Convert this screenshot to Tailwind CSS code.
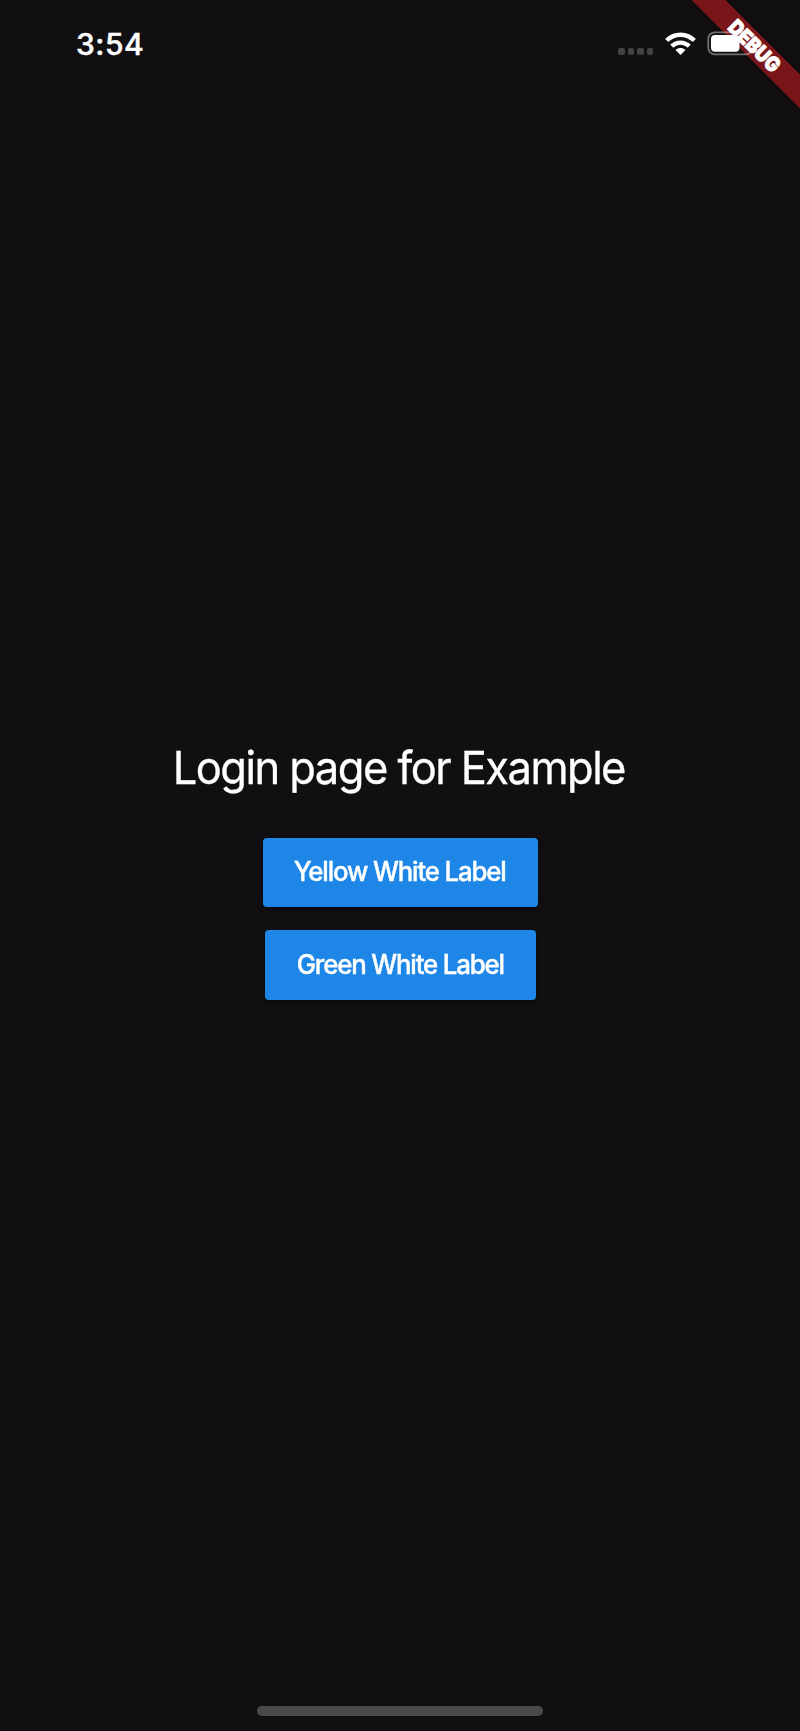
<!DOCTYPE html>
<html lang="en">
<head>
<meta charset="utf-8">
<title>Login</title>
<script src="https://cdn.jsdelivr.net/npm/@tailwindcss/browser@4"></script>
</head>
<body class="bg-[#110f12] text-white font-['Inter','Liberation_Sans',sans-serif]">
<div class="relative w-[800px] h-[1731px] overflow-hidden flex flex-col">
  <header class="h-[88px] shrink-0 flex items-center justify-between pl-[76px] pr-[45px]">
    <span class="text-[30px] font-medium leading-none tracking-[0.5px] [-webkit-text-stroke:0.5px_white]">3:54</span>
    <div class="flex items-center gap-[12px]">
      <div class="flex gap-[3px] pt-[15px]">
        <i class="w-[6.5px] h-[7px] rounded-[2px] bg-[#434245]"></i>
        <i class="w-[6.5px] h-[7px] rounded-[2px] bg-[#434245]"></i>
        <i class="w-[6.5px] h-[7px] rounded-[2px] bg-[#434245]"></i>
        <i class="w-[6.5px] h-[7px] rounded-[2px] bg-[#434245]"></i>
      </div>
      <svg class="w-[31px] h-[24px]" viewBox="0 0 31 24" fill="#fff">
        <path d="M15.5 0.5C21.3 0.5 26.5 2.8 30.4 6.4C30.8 6.8 30.8 7 30.4 7.4L28.2 9.6C27.9 9.9 27.6 9.9 27.2 9.6C24.1 6.7 20 5 15.5 5S6.900 6.700 3.800 9.600C3.400 9.900 3.100 9.900 2.800 9.600L0.600 7.400C0.200 7 0.200 6.800 0.600 6.400C4.500 2.800 9.700 0.500 15.500 0.500Z"/>
        <path d="M15.500 8.400C19.200 8.400 22.600 9.800 25.200 12.100C25.600 12.500 25.600 12.800 25.200 13.200L23.100 15.200C22.700 15.600 22.400 15.600 22 15.200C20.200 13.700 18 12.800 15.500 12.800S10.800 13.700 9 15.200C8.600 15.600 8.300 15.600 7.900 15.200L5.800 13.200C5.400 12.800 5.400 12.500 5.800 12.100C8.400 9.800 11.800 8.400 15.500 8.400Z"/>
        <path d="M15.500 16C17.200 16 18.800 16.600 20 17.600C20.400 18 20.400 18.300 20 18.600L16 22.600C15.700 23 15.300 23 15 22.600L11 18.600C10.600 18.300 10.600 18 11 17.600C12.200 16.600 13.800 16 15.500 16Z"/>
      </svg>
      <div class="w-[47px] h-[24px]"></div>
    </div>
  </header>

  <!-- Debug ribbon with the battery over it -->
  <svg class="absolute top-0 right-0 w-[120px] h-[120px]" viewBox="680 0 120 120">
    <defs><filter id="s" x="-20%" y="-20%" width="140%" height="140%"><feGaussianBlur stdDeviation="4"/></filter></defs>
    <path d="M692 0H725L800 75V108Z" fill="#000" opacity=".4" filter="url(#s)"/>
    <path d="M691.500 0H725.500L800 74.500V108.500Z" fill="#7a1519"/>
    <rect x="708.300" y="32.300" width="44.500" height="22" rx="6.500" fill="none" stroke="#fff" stroke-opacity=".4" stroke-width="1.800"/>
    <rect x="711" y="35" width="28.500" height="16.800" rx="4" fill="#fff"/>
    <text transform="translate(754.500 46) rotate(45)" y="7.300" text-anchor="middle" textLength="64" lengthAdjust="spacingAndGlyphs" font-family="Inter" font-size="20.500" font-weight="900" fill="#fff" stroke="#fff" stroke-width=".9">DEBUG</text>
  </svg>

  <main class="flex-1 flex flex-col items-center pt-[652px]">
    <h1 class="text-[45px] leading-[56px] tracking-[-1.6px] scale-x-[0.967] pr-[2px] whitespace-nowrap [-webkit-text-stroke:0.3px_white]">Login page for Example</h1>
    <button class="mt-[41.500px] w-[275px] h-[69.500px] rounded-[4px] bg-[#1e86e6] shadow-[0_3px_5px_#0006] text-[26.500px] font-medium tracking-[-1.2px] whitespace-nowrap"><span class="inline-block scale-x-[0.975] [-webkit-text-stroke:0.4px_white]">Yellow White Label</span></button>
    <button class="mt-[23px] w-[271px] h-[70px] rounded-[4px] bg-[#1e86e6] shadow-[0_3px_5px_#0006] text-[26.500px] font-medium tracking-[-1.2px] whitespace-nowrap"><span class="inline-block scale-x-[0.975] [-webkit-text-stroke:0.4px_white]">Green White Label</span></button>
  </main>

  <footer class="flex justify-center pb-[15px]">
    <div class="w-[286px] h-[10px] rounded-full bg-[#4a494b]"></div>
  </footer>
</div>
</body>
</html>
